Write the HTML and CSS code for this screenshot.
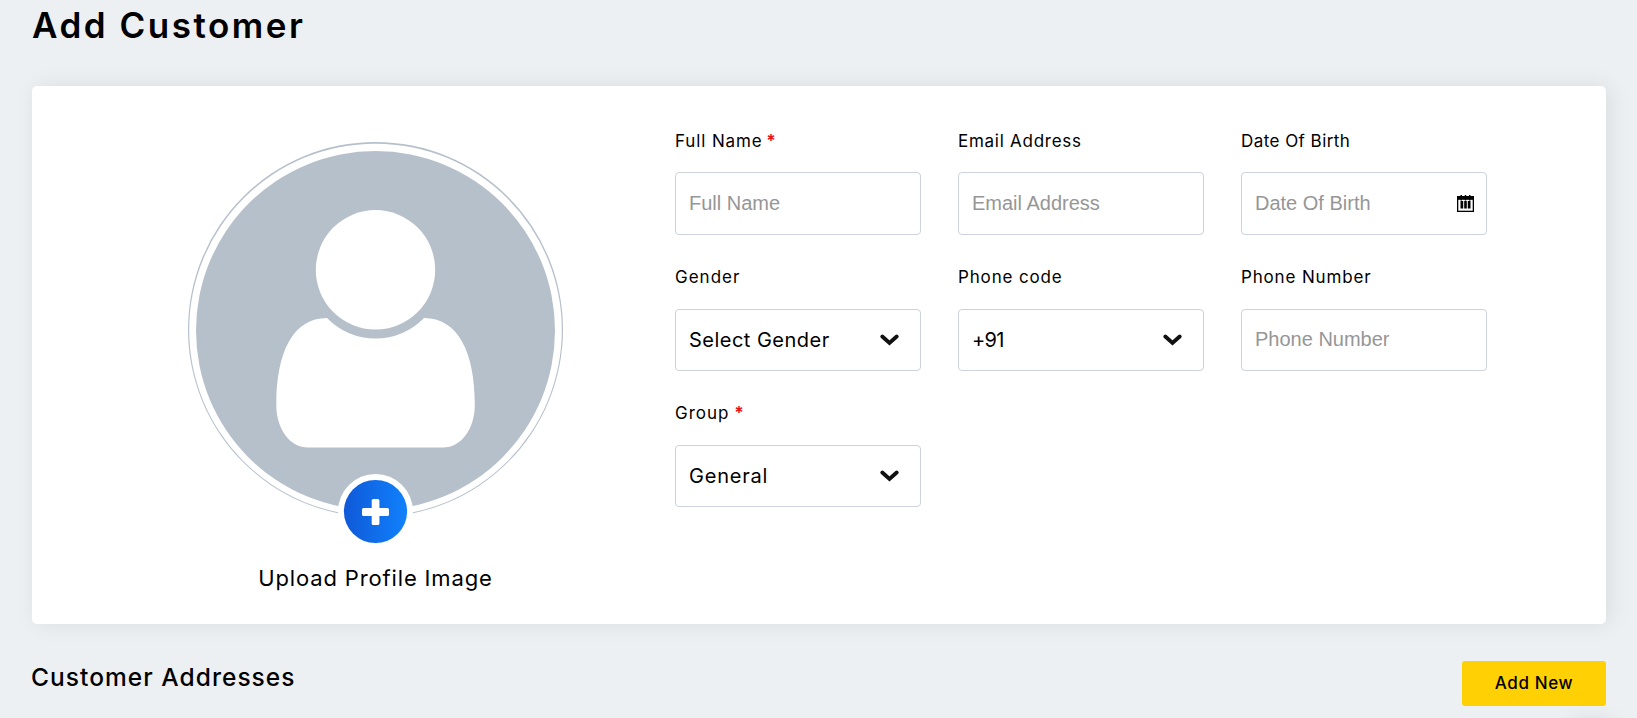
FILE: index.html
```html
<!DOCTYPE html>
<html lang="en">
<head>
<meta charset="utf-8">
<title>Add Customer</title>
<link rel="stylesheet" href="styles.css">
</head>
<body>
<main class="page">
  <h1 class="page-title">Add Customer</h1>
  <section class="card">
    <div class="profile">
      <svg class="avatar" viewBox="188 142 375 402" width="375" height="402">
        <defs>
          <linearGradient id="blue" x1="0" x2="1" y1="0" y2="0">
            <stop offset="0" stop-color="#0f59d8"/><stop offset="1" stop-color="#1181fc"/>
          </linearGradient>
        </defs>
        <circle cx="375.5" cy="329.5" r="187.5" fill="#b6c0cb"/>
        <ellipse cx="375.5" cy="329.9" rx="186.3" ry="186.2" fill="#fff"/>
        <circle cx="375.5" cy="330.5" r="179.5" fill="#b6c0cb"/>
        <circle cx="375.5" cy="269.8" r="59.7" fill="#fff"/>
        <path fill="#fff" d="M327 318A67.6 67.6 0 0 0 424 318C458 318 474.800 352 474.800 405C474.800 429 461 447.500 443 447.500H308C290 447.500 276.300 429 276.300 405C276.300 352 293 318 327 318Z"/>
        <circle cx="375.5" cy="511.500" r="37.500" fill="#fff"/>
        <circle cx="375.5" cy="511.500" r="31.600" fill="url(#blue)"/>
        <rect x="362" y="508" width="27" height="8" rx="1.500" fill="#fff"/>
        <rect x="371.700" y="499" width="7.700" height="26" rx="1.500" fill="#fff"/>
      </svg>
      <p class="upload">Upload Profile Image</p>
    </div>
    <form class="fields">
      <div class="field"><label class="label l-name">Full Name <b class="req">*</b></label><input class="control" placeholder="Full Name"></div>
      <div class="field"><label class="label l-email">Email Address</label><input class="control" placeholder="Email Address"></div>
      <div class="field"><label class="label l-dob">Date Of Birth</label>
        <div class="control with-icon"><input class="bare" placeholder="Date Of Birth">
          <svg class="calendar" width="17" height="17" viewBox="0 0 17 17"><path d="M0 1H17V17H0Z"/><path fill="#fff" d="M1.300 4.800H15.700V15.700H1.300Z"/><path d="M3.500 6H6.200V13.500H3.500ZM7.200 6H9.800V13.500H7.200ZM10.800 6H13.500V13.500H10.800ZM3.500 0H5V5.500H3.500ZM7.800 0H9.200V5.500H7.800ZM12 0H13.500V5.500H12Z"/></svg>
        </div></div>
      <div class="field"><label class="label l-gender">Gender</label>
        <div class="control select"><span class="v-gender">Select Gender</span><svg class="chevron" width="19" height="12" viewBox="0 0 19 12"><path d="M2.300 2.500L9.500 9L16.700 2.500"/></svg></div></div>
      <div class="field"><label class="label l-code">Phone code</label>
        <div class="control select"><span class="v-code">+91</span><svg class="chevron" width="19" height="12" viewBox="0 0 19 12"><path d="M2.300 2.500L9.500 9L16.700 2.500"/></svg></div></div>
      <div class="field"><label class="label l-phone">Phone Number</label><input class="control phone" placeholder="Phone Number"></div>
      <div class="field"><label class="label l-group">Group <b class="req">*</b></label>
        <div class="control select"><span class="v-general">General</span><svg class="chevron" width="19" height="12" viewBox="0 0 19 12"><path d="M2.300 2.500L9.500 9L16.700 2.500"/></svg></div></div>
    </form>
  </section>
  <section class="addresses">
    <h2 class="sub-title">Customer Addresses</h2>
    <button class="add" type="button">Add New</button>
  </section>
</main>
<div class="floating"></div>
</body>
</html>
```
FILE: styles.css
```css
* { box-sizing: border-box; }
html { overflow: hidden; }
body {
  margin: 0;
  height: 718px;
  overflow: hidden;
  background: #ecf0f3;
  color: #000;
  font-family: Inter, sans-serif;
}
.page { padding: 0 31px 0 32px; }
.page-title {
  margin: 0;
  height: 86px;
  padding-top: 5px;
  font-size: 35px;
  line-height: 40px;
  font-weight: 600;
  letter-spacing: 2.5px;
}
.card {
  display: flex;
  height: 538px;
  background: #fff;
  border-radius: 5px;
  box-shadow: 4px 0 22px rgba(0, 0, 0, .08);
}
.profile {
  width: 643px;
  padding: 56px 0 0 156px;
}
.avatar { display: block; }
.upload {
  width: 375px;
  margin: 19px 0 0;
  text-align: center;
  font-size: 22px;
  line-height: 30px;
  font-weight: 400;
  letter-spacing: .85px;
  white-space: nowrap;
}
.fields {
  display: grid;
  grid-template-columns: repeat(3, 246px);
  grid-template-rows: 136px 136px 136px;
  column-gap: 37px;
  align-content: start;
  padding-top: 40px;
}
.field { display: flex; flex-direction: column; }
.label {
  height: 47px;
  line-height: 30px;
  font-size: 17px;
  white-space: nowrap;
}
.field:nth-child(-n+3) .label { height: 46px; }
.field:nth-child(-n+3) .control { height: 63px; }
.l-name { letter-spacing: .88px; }
.l-email { letter-spacing: .73px; }
.l-dob { letter-spacing: .45px; }
.l-gender { letter-spacing: 1px; }
.l-code { letter-spacing: .85px; }
.l-phone { letter-spacing: .84px; }
.l-group { letter-spacing: 1px; }
.req { color: #e0161c; font-weight: 700; letter-spacing: 0; margin-left: -2px; }
.l-group .req { margin-left: -1px; }
.control {
  width: 246px;
  height: 62px;
  padding: 0 13px;
  border: 1px solid #cdd2dc;
  border-radius: 4px;
  background: #fff;
  outline: 0;
}
input { font: 20px "Liberation Sans", Arial, sans-serif; }
input::placeholder { color: #969696; opacity: 1; }
.phone { padding-bottom: 2px; }
.bare { flex: 1; min-width: 0; padding: 0; border: 0; outline: 0; }
.with-icon, .select {
  display: flex;
  align-items: center;
  justify-content: space-between;
}
.with-icon { padding-right: 12px; }
.select { padding-right: 21px; font-size: 20px; }
.v-gender { letter-spacing: .48px; }
.v-code { letter-spacing: -.7px; }
.v-general { letter-spacing: .8px; }
.chevron { fill: none; stroke: #111; stroke-width: 3.8; stroke-linecap: round; }
.addresses {
  display: flex;
  justify-content: space-between;
  align-items: flex-start;
}
.sub-title {
  margin: 35px 0 0 -1px;
  font-size: 24.5px;
  line-height: 36px;
  font-weight: 500;
  letter-spacing: 1.04px;
}
.add {
  width: 144px;
  height: 45px;
  margin-top: 37px;
  padding: 0 0 2px;
  border: 0;
  border-radius: 3px;
  background: #ffd104;
  color: #000;
  font: 500 17px Inter, sans-serif;
  letter-spacing: .6px;
}
/* Round action button below the fold; its shadow reaches into view */
.floating {
  position: fixed;
  left: 1562px;
  top: 722px;
  width: 60px;
  height: 60px;
  border-radius: 50%;
  background: #fff;
  box-shadow: 0 0 24px rgba(0, 0, 0, .12);
}
```
